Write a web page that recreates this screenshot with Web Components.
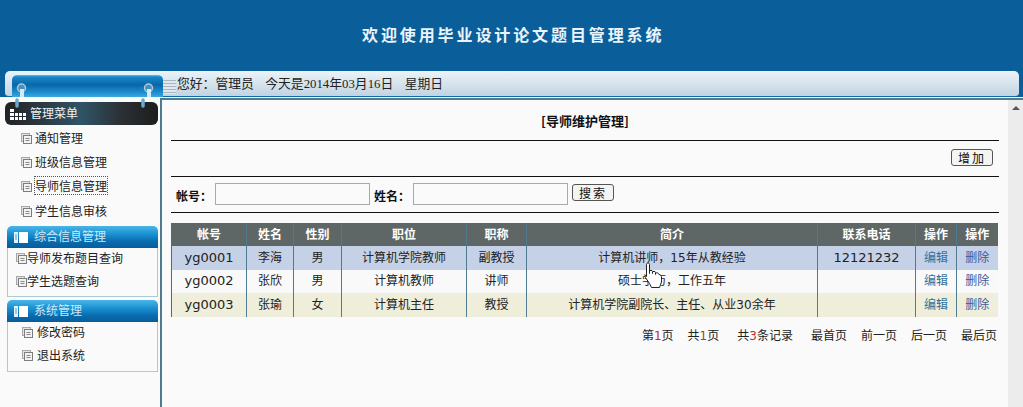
<!DOCTYPE html>
<html lang="zh">
<head>
<meta charset="utf-8">
<title>毕业设计论文题目管理系统</title>
<style>
  html, body { margin: 0; height: 100%; overflow: hidden; background: #fafafa; }
  body { font: 12px "Noto Sans CJK SC", "Liberation Sans", sans-serif; color: #222; }
</style>
</head>
<body>
<app-shell>
  <top-banner slot="banner">欢迎使用毕业设计论文题目管理系统</top-banner>
  <status-bar slot="status"></status-bar>
  <side-menu slot="side"></side-menu>
  <manage-panel slot="main"></manage-panel>
</app-shell>
<hand-cursor></hand-cursor>

<script>
// Outer frame of the page: banner, status bar, then menu + content.
class AppShell extends HTMLElement {
  constructor() {
    super();
    this.attachShadow({ mode: "open" });
    this.shadowRoot.innerHTML = `
      <style>
        :host { display: grid; grid-template-columns: 160px 1fr; grid-template-rows: 71px 27px 309px; height: 407px; }
        .wide { grid-column: 1 / 3; }
      </style>
      <div class="wide"><slot name="banner"></slot></div>
      <div class="wide"><slot name="status"></slot></div>
      <slot name="side"></slot>
      <slot name="main"></slot>
    `;
  }
}

class TopBanner extends HTMLElement {
  constructor() {
    super();
    this.attachShadow({ mode: "open" });
    this.shadowRoot.innerHTML = `
      <style>
        :host { display: block; }
        .banner {
          height: 71px; box-sizing: border-box; padding: 23px 0 0 362px;
          background: #0a5f9b; color: #eaf4fa;
          font: bold 16px/22px "Noto Sans CJK SC", sans-serif; letter-spacing: 2.9px;
        }
      </style>
      <div class="banner"><slot></slot></div>
    `;
  }
}

class StatusBar extends HTMLElement {
  constructor() {
    super();
    this.attachShadow({ mode: "open" });
    this.shadowRoot.innerHTML = `
      <style>
        :host { display: block; }
        .outer { height: 27px; background: linear-gradient(#0a5f9b 0 26px, #fafafa 26px); padding: 0 4px 0 5px; }
        .bar {
          position: relative; height: 26px; box-sizing: border-box; padding: 4px 0 0 7px;
          display: flex; border-radius: 5px 5px 4px 4px; border-bottom: 1px solid #0d6ba8;
          background: linear-gradient(#eaf3f8, #c2d4e1);
        }
        .tab {
          width: 151px; height: 22px; border-radius: 5px 5px 0 0;
          background: linear-gradient(#5cc0e8 0, #1787c9 2px, #0a67a8 45%, #1e8fcf 80%, #3aa9dd);
        }
        .grip { width: 13px; margin: 5px 1px 0 0; height: 14px;
          background: repeating-linear-gradient(#a9b6c0 0 1px, #dfe8ee 1px 3px); }
        .text { font-size: 12.8px; line-height: 16px; color: #222; white-space: pre; }
        .num { font-family: "Liberation Serif", serif; }
      </style>
      <div class="outer">
        <div class="bar">
          <div class="tab"></div>
          <div class="grip"></div>
          <div class="text">您好：管理员    今天是<span class="num">2014</span>年<span class="num">03</span>月<span class="num">16</span>日    星期日</div>
        </div>
      </div>
    `;
  }
}

// small square bullet of the menu entries
const BULLET = `<svg width="11" height="11" viewBox="0 0 11 11" aria-hidden="true">
  <rect x="0.5" y="0.5" width="8" height="8" fill="#e4e4e4" stroke="#a8a8a8"/>
  <rect x="2.5" y="2.5" width="8" height="8" fill="#f2f2f2" stroke="#7d7d7d"/>
  <path d="M4.5 5.5h4M4.5 7.5h4" stroke="#8a8a8a"/>
</svg>`;

class MenuItem extends HTMLElement {
  constructor() {
    super();
    this.attachShadow({ mode: "open" });
    this.shadowRoot.innerHTML = `
      <style>
        :host { display: flex; align-items: center; height: var(--item-h, 24.3px); margin-bottom: var(--item-mb, 0); padding-left: var(--item-pad, 21px); gap: var(--item-gap, 3px); color: #222; font-size: 12px; white-space: nowrap; }
        svg { flex: none; margin-top: 2px; }
      </style>
      ${BULLET}<slot></slot>
    `;
  }
}

class MenuGroup extends HTMLElement {
  constructor() {
    super();
    this.attachShadow({ mode: "open" });
  }
  connectedCallback() {
    const h = this.getAttribute("body-height");
    this.shadowRoot.innerHTML = `
      <style>
        :host { display: block; margin: 0 0 3px 7px; width: 151px; }
        .head {
          height: 22px; box-sizing: border-box; padding: 0 0 3px 7px; display: flex; align-items: center; gap: 6px;
          border-radius: 5px 5px 0 0; color: #cfe8f6; font-size: 12px;
          background: linear-gradient(#4bb6e6 0, #1b93d4 35%, #0a6cae 70%, #075d9c);
        }
        .head svg { margin-top: 3px; }
        .body {
          height: ${h}px; box-sizing: border-box; background: #fafafa;
          border: 1px solid #a9cbd6; border-top: 0;
        }
      </style>
      <div class="head">
        <svg width="14" height="11" viewBox="0 0 14 11" aria-hidden="true">
          <rect width="4" height="11" fill="#e6f3fa"/><path d="M1 3h2M1 5h2M1 7h2" stroke="#5a9cc8"/>
          <rect x="5" width="9" height="11" fill="#fff"/>
        </svg>
        ${this.getAttribute("label")}
      </div>
      <div class="body"><slot></slot></div>
    `;
  }
}

class SideMenu extends HTMLElement {
  constructor() {
    super();
    this.attachShadow({ mode: "open" });
    this.shadowRoot.innerHTML = `
      <style>
        :host { display: block; background: #fafafa; }
        .title {
          height: 23px; box-sizing: border-box; margin: 4px 2px 2px 5px; padding: 0 0 3px 5px; display: flex; align-items: center; gap: 4px;
          border-radius: 6px; color: #eef4f7; font-size: 12px;
          background: linear-gradient(90deg, #222 0, #2b3a44 25%, #2f5468 50%, #2c3136 75%, #1d1d1d);
        }
        .title svg { margin-top: 3px; }
        .list { height: 99px; margin: -2px 0 2px; }
        .focus { outline: 1px dotted #555; }
        .group-tight { --item-h: 19px; --item-mb: 4px; --item-pad: 8px; --item-gap: 0; }
        .group-wide { --item-h: 19px; --item-mb: 4px; --item-pad: 14px; --item-gap: 4px; }
      </style>
      <div class="title">
        <svg width="16" height="14" viewBox="0 0 16 14" aria-hidden="true" fill="#fff">
          <path d="M0 2h4v3H0zM0 6h4v3H0zM0 10h4v3H0zM5 6h3v3H5zM5 10h3v3H5zM9 6h3v3H9zM9 10h3v3H9zM13 6h3v3h-3zM13 10h3v3h-3z"/>
        </svg>
        管理菜单
      </div>
      <div class="list">
        <menu-item>通知管理</menu-item>
        <menu-item>班级信息管理</menu-item>
        <menu-item><span class="focus">导师信息管理</span></menu-item>
        <menu-item>学生信息审核</menu-item>
      </div>
      <menu-group class="group-tight" label="综合信息管理" body-height="49">
        <menu-item>导师发布题目查询</menu-item>
        <menu-item>学生选题查询</menu-item>
      </menu-group>
      <menu-group class="group-wide" label="系统管理" body-height="50">
        <menu-item>修改密码</menu-item>
        <menu-item>退出系统</menu-item>
      </menu-group>
    `;
  }
}

class TeacherTable extends HTMLElement {
  constructor() {
    super();
    this.attachShadow({ mode: "open" });
    const rows = [
      ["yg0001", "李海", "男", "计算机学院教师", "副教授", "计算机讲师，<i>15</i>年从教经验", "12121232"],
      ["yg0002", "张欣", "男", "计算机教师", "讲师", "硕士学历，工作五年", ""],
      ["yg0003", "张瑜", "女", "计算机主任", "教授", "计算机学院副院长、主任、从业<i>30</i>余年", ""],
    ];
    const widths = [75, 47, 48, 125, 60, 291, 98, 41, 41];
    const heads = ["帐号", "姓名", "性别", "职位", "职称", "简介", "联系电话", "操作", "操作"];
    this.shadowRoot.innerHTML = `
      <style>
        :host { display: block; margin: 0 11px 0 11px; }
        table { width: 826px; border-collapse: collapse; table-layout: fixed; font-size: 12px; }
        th { height: 23px; padding: 0 0 2px; box-sizing: border-box; background: #5f6766; color: #fff; font-weight: bold; border-left: 1px solid #4f7a8f; }
        td { height: 23.6px; padding: 0 0 3px; box-sizing: border-box; text-align: center; color: #222; border-left: 1px solid #4f7a8f; white-space: nowrap; }
        th:first-child, td:first-child { border-left: 1px solid #5f6766; }
        tr:nth-child(1) td { background: #c5d1e7; }
        tr:nth-child(2) td { background: #f9f9f9; }
        tr:nth-child(3) td { background: #eeeeda; }
        td.mono { padding-bottom: 1px; }
        .mono, i { font: 13px Verdana, "DejaVu Sans", sans-serif; }
        i { font-size: 12px; }
        a { color: #35709a; text-decoration: none; }
        a.del { color: #3d5a9e; }
      </style>
      <table>
        <colgroup>${widths.map((w) => `<col style="width:${w}px">`).join("")}</colgroup>
        <thead><tr>${heads.map((h) => `<th>${h}</th>`).join("")}</tr></thead>
        <tbody>
          ${rows.map((r) => `<tr>
            <td class="mono">${r[0]}</td><td>${r[1]}</td><td>${r[2]}</td><td>${r[3]}</td><td>${r[4]}</td><td>${r[5]}</td>
            <td class="mono">${r[6]}</td><td><a href="#">编辑</a></td><td><a class="del" href="#">删除</a></td>
          </tr>`).join("")}
        </tbody>
      </table>
    `;
  }
}

class PagerBar extends HTMLElement {
  constructor() {
    super();
    this.attachShadow({ mode: "open" });
    this.shadowRoot.innerHTML = `
      <style>
        :host { display: flex; justify-content: flex-end; gap: 14px; margin: 9px 11px 0 0; font-size: 12px; line-height: 18px; color: #222; white-space: nowrap; }
        b { font: 12px Verdana, "DejaVu Sans", sans-serif; color: #c03030; }
        span { display: block; }
        .pad { margin-right: 4px; }
      </style>
      <span>第<b>1</b>页</span><span class="pad">共<b>1</b>页</span><span class="pad">共<b>3</b>条记录</span>
      <span>最首页</span><span>前一页</span><span>后一页</span><span>最后页</span>
    `;
  }
}

class ManagePanel extends HTMLElement {
  constructor() {
    super();
    this.attachShadow({ mode: "open" });
    this.shadowRoot.innerHTML = `
      <style>
        :host { display: grid; grid-template-columns: 1fr 15px; height: 309px; box-sizing: border-box; background: #fafafa; border-left: 2px solid #4f7a8f; border-top: 2px solid #4f7a8f; }
        .content { min-width: 0; }
        .title { height: 41px; box-sizing: border-box; margin: 0 9px; padding-top: 12px; line-height: 17px; text-align: center; font-size: 13px; font-weight: bold; color: #111; border-bottom: 1px solid #111; }
        .tools { height: 36px; box-sizing: border-box; margin: 0 9px; padding: 8px 6px 0 0; display: flex; justify-content: flex-end; align-items: flex-start; border-bottom: 1px solid #111; }
        .search { height: 36px; box-sizing: border-box; margin: 0 9px; padding: 6px 0 0 5px; display: flex; align-items: flex-start; border-bottom: 1px solid #111; font-weight: bold; color: #111; }
        .search label { line-height: 26px; width: 39px; white-space: nowrap; }
        .search label + input + label { margin-left: 4px; }
        input { width: 155px; height: 22px; box-sizing: border-box; padding: 0; margin: 0; background: #fafafa; border: 1px solid #a9a9a9; }
        button { width: 42px; height: 17px; box-sizing: border-box; padding: 0; font: 12px/14px "Noto Sans CJK SC", sans-serif; letter-spacing: 2px; color: #111; background: #f4f4f0; border: 1px solid #555; border-radius: 3px; }
        .search button { margin: 1px 0 0 4px; }
        teacher-table { margin-top: 10px; margin-left: 9px; }
        .scroll { background: #ececec; display: flex; justify-content: center; padding-top: 6px; }
        .arrow { width: 0; height: 0; border: 4px solid transparent; border-top: 0; border-bottom: 4px solid #555; }
      </style>
      <div class="content">
        <div class="title">[导师维护管理]</div>
        <div class="tools"><button>增加</button></div>
        <div class="search">
          <label>帐号：</label><input type="text">
          <label>姓名：</label><input type="text">
          <button>搜索</button>
        </div>
        <teacher-table></teacher-table>
        <pager-bar></pager-bar>
      </div>
      <div class="scroll"><div class="arrow"></div></div>
    `;
  }
}

// Overlay only: the mouse pointer and the hanging rings are over other content.
class HandCursor extends HTMLElement {
  constructor() {
    super();
    this.attachShadow({ mode: "open" });
    this.shadowRoot.innerHTML = `
      <style>
        :host { position: absolute; left: 0; top: 0; width: 0; height: 0; }
        svg { position: absolute; overflow: visible; }
      </style>
      <svg style="left:0;top:0" width="170" height="110" viewBox="0 0 170 110" aria-hidden="true">
        <circle cx="21.500" cy="88" r="4" fill="#3f93c4" stroke="#b4c6d2" stroke-width="1.500"/>
        <circle cx="148.500" cy="88" r="4" fill="#3f93c4" stroke="#b4c6d2" stroke-width="1.500"/>
        <path d="M22 89v8M149 89v8" stroke="#d6e8f2" stroke-width="4"/>
        <path d="M17 100v6M143 100v6" stroke="#6aa8cc" stroke-width="3.500" stroke-linecap="round"/>
      </svg>
      <svg style="left:645px;top:262px" width="18" height="26" viewBox="0 0 18 26" aria-hidden="true">
        <path d="M1.500 2.500C1.500 .5 4.500 .5 4.500 2.500V11.500V9.500C4.500 8 7.500 8 7.500 9.500V11.500V10.500C7.500 9 10.500 9 10.500 10.500V12.500V11.500C10.500 10.500 13.500 10.500 13.500 12L16 13.500C16.500 14 16.500 15 16.500 16V20L14.500 25.500H6.500L4.500 21.500L.5 15.500C-.5 13.500 1 12.500 1.500 14.500z" fill="#fff" stroke="#222"/>
      </svg>
    `;
  }
}

customElements.define("app-shell", AppShell);
customElements.define("top-banner", TopBanner);
customElements.define("status-bar", StatusBar);
customElements.define("menu-item", MenuItem);
customElements.define("menu-group", MenuGroup);
customElements.define("side-menu", SideMenu);
customElements.define("teacher-table", TeacherTable);
customElements.define("pager-bar", PagerBar);
customElements.define("manage-panel", ManagePanel);
customElements.define("hand-cursor", HandCursor);
</script>
</body>
</html>
